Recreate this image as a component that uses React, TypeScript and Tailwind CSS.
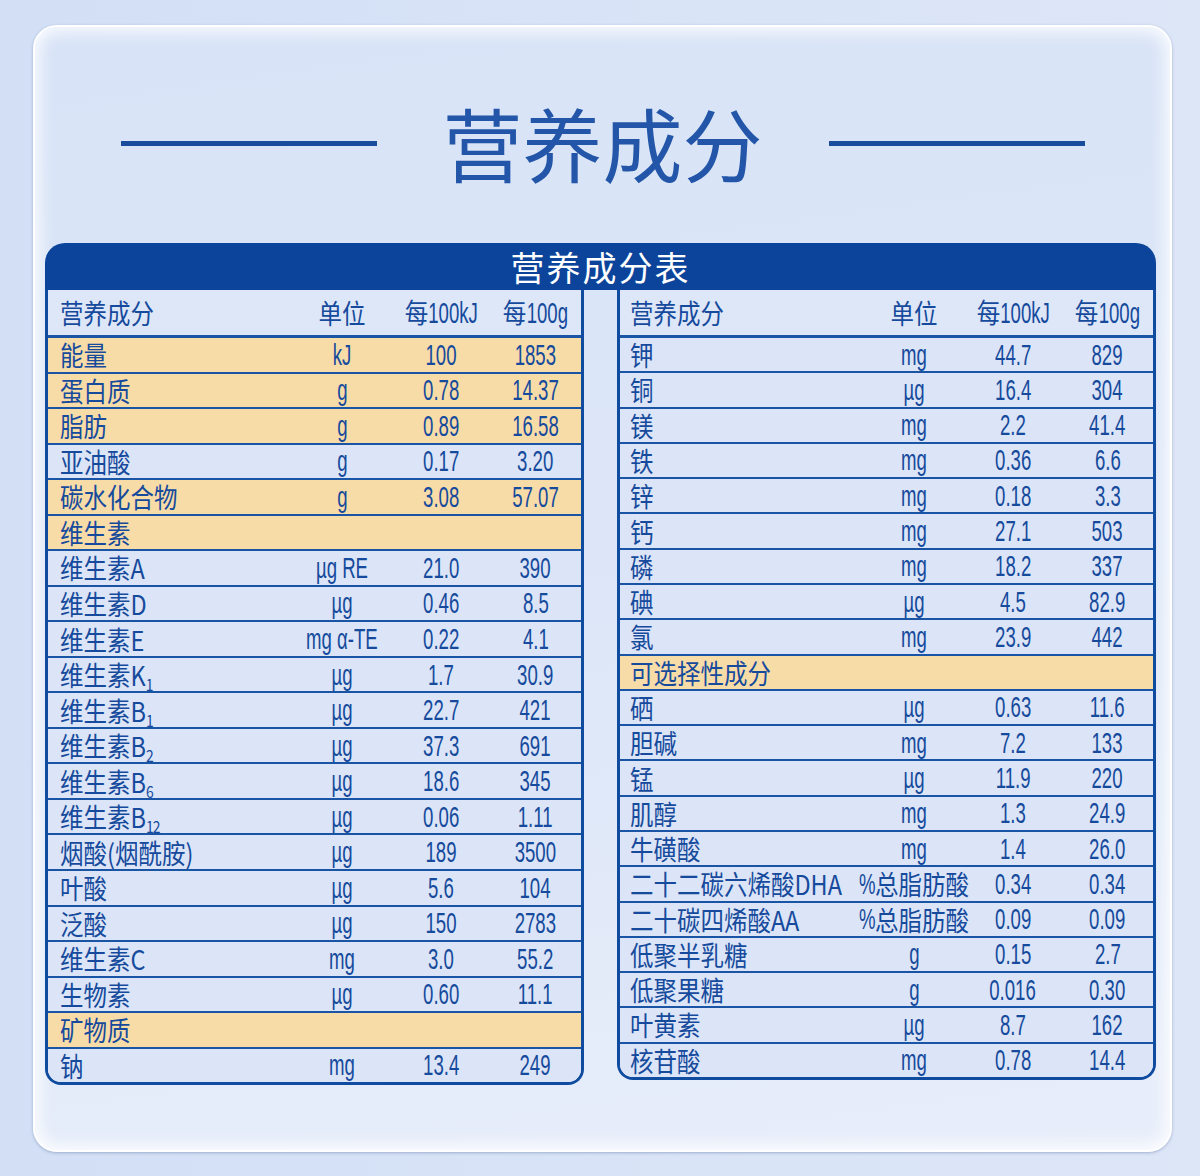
import React from "react";

type Row = {
  name: React.ReactNode;
  unit?: string;
  kj?: string;
  g?: string;
  hl?: boolean;
};

const CJK = "font-['Noto_Sans_CJK_SC',sans-serif]";
const NUM = "font-['Liberation_Sans','Noto_Sans_CJK_SC',sans-serif]";

// condensed latin / digits
function Cond({ children }: { children: React.ReactNode }) {
  return (
    <span
      className={`inline-block shrink-0 whitespace-nowrap text-[30px] leading-none scale-x-[0.62] ${NUM}`}
    >
      {children}
    </span>
  );
}

function Han({ children }: { children: React.ReactNode }) {
  return (
    <span
      className={`inline-block shrink-0 whitespace-nowrap text-[27px] leading-none scale-x-[0.87] ${CJK}`}
    >
      {children}
    </span>
  );
}

function Sub({ children }: { children: React.ReactNode }) {
  return <span className="relative top-[5px] text-[16px] leading-none tracking-[-1px]">{children}</span>;
}

function Unit({ u }: { u?: string }) {
  if (!u) return null;
  if (u === "%总脂肪酸") {
    return (
      <span className="flex items-center">
        <span className="flex w-[16px] justify-center">
          <Cond>%</Cond>
        </span>
        <span className="flex w-[94px] justify-center">
          <Han>总脂肪酸</Han>
        </span>
      </span>
    );
  }
  return <Cond>{u}</Cond>;
}

const left: Row[] = [
  { name: "能量", unit: "kJ", kj: "100", g: "1853", hl: true },
  { name: "蛋白质", unit: "g", kj: "0.78", g: "14.37", hl: true },
  { name: "脂肪", unit: "g", kj: "0.89", g: "16.58", hl: true },
  { name: "亚油酸", unit: "g", kj: "0.17", g: "3.20" },
  { name: "碳水化合物", unit: "g", kj: "3.08", g: "57.07", hl: true },
  { name: "维生素", hl: true },
  { name: "维生素A", unit: "µg RE", kj: "21.0", g: "390" },
  { name: "维生素D", unit: "µg", kj: "0.46", g: "8.5" },
  { name: "维生素E", unit: "mg α-TE", kj: "0.22", g: "4.1" },
  { name: <>维生素K<Sub>1</Sub></>, unit: "µg", kj: "1.7", g: "30.9" },
  { name: <>维生素B<Sub>1</Sub></>, unit: "µg", kj: "22.7", g: "421" },
  { name: <>维生素B<Sub>2</Sub></>, unit: "µg", kj: "37.3", g: "691" },
  { name: <>维生素B<Sub>6</Sub></>, unit: "µg", kj: "18.6", g: "345" },
  { name: <>维生素B<Sub>12</Sub></>, unit: "µg", kj: "0.06", g: "1.11" },
  { name: "烟酸(烟酰胺)", unit: "µg", kj: "189", g: "3500" },
  { name: "叶酸", unit: "µg", kj: "5.6", g: "104" },
  { name: "泛酸", unit: "µg", kj: "150", g: "2783" },
  { name: "维生素C", unit: "mg", kj: "3.0", g: "55.2" },
  { name: "生物素", unit: "µg", kj: "0.60", g: "11.1" },
  { name: "矿物质", hl: true },
  { name: "钠", unit: "mg", kj: "13.4", g: "249" },
];

const right: Row[] = [
  { name: "钾", unit: "mg", kj: "44.7", g: "829" },
  { name: "铜", unit: "µg", kj: "16.4", g: "304" },
  { name: "镁", unit: "mg", kj: "2.2", g: "41.4" },
  { name: "铁", unit: "mg", kj: "0.36", g: "6.6" },
  { name: "锌", unit: "mg", kj: "0.18", g: "3.3" },
  { name: "钙", unit: "mg", kj: "27.1", g: "503" },
  { name: "磷", unit: "mg", kj: "18.2", g: "337" },
  { name: "碘", unit: "µg", kj: "4.5", g: "82.9" },
  { name: "氯", unit: "mg", kj: "23.9", g: "442" },
  { name: "可选择性成分", hl: true },
  { name: "硒", unit: "µg", kj: "0.63", g: "11.6" },
  { name: "胆碱", unit: "mg", kj: "7.2", g: "133" },
  { name: "锰", unit: "µg", kj: "11.9", g: "220" },
  { name: "肌醇", unit: "mg", kj: "1.3", g: "24.9" },
  { name: "牛磺酸", unit: "mg", kj: "1.4", g: "26.0" },
  { name: "二十二碳六烯酸DHA", unit: "%总脂肪酸", kj: "0.34", g: "0.34" },
  { name: "二十碳四烯酸AA", unit: "%总脂肪酸", kj: "0.09", g: "0.09" },
  { name: "低聚半乳糖", unit: "g", kj: "0.15", g: "2.7" },
  { name: "低聚果糖", unit: "g", kj: "0.016", g: "0.30" },
  { name: "叶黄素", unit: "µg", kj: "8.7", g: "162" },
  { name: "核苷酸", unit: "mg", kj: "0.78", g: "14.4" },
];

const GRID = "grid grid-cols-[244px_100px_98px_1fr] items-center";

function NameCell({ children, pad }: { children: React.ReactNode; pad: string }) {
  return (
    <div className={`flex items-center ${pad}`}>
      <span
        className={`inline-block origin-left whitespace-nowrap text-[27px] leading-none scale-x-[0.87] ${CJK}`}
      >
        {children}
      </span>
    </div>
  );
}

function Table({ rows, height, pad }: { rows: Row[]; height: string; pad: string }) {
  return (
    <div
      className={`flex w-[539px] flex-col overflow-hidden rounded-b-[16px] border-x-[3px] border-b-[3px] border-[#0f4c9f] text-[#164a9c] ${height}`}
    >
      {/* column header */}
      <div className={`${GRID} h-[45px] shrink-0 bg-[#dde7f8]`}>
        <NameCell pad={pad}>营养成分</NameCell>
        <div className="flex justify-center">
          <Han>单位</Han>
        </div>
        <div className="flex justify-center">
          <span className="flex w-[24px] justify-center">
            <Han>每</Han>
          </span>
          <span className="flex w-[50px] justify-center">
            <Cond>100kJ</Cond>
          </span>
        </div>
        <div className="flex justify-center">
          <span className="flex w-[24px] justify-center">
            <Han>每</Han>
          </span>
          <span className="flex w-[42px] justify-center">
            <Cond>100g</Cond>
          </span>
        </div>
      </div>

      {rows.map((r, i) => (
        <div
          key={i}
          className={[
            GRID,
            "min-h-0 flex-1 border-[#1a54a4]",
            i === 0 ? "border-t-[3px]" : "border-t-2",
            r.hl ? "bg-[#f8dca8]" : "bg-[#dbe5f7]",
          ].join(" ")}
        >
          <NameCell pad={pad}>{r.name}</NameCell>
          <div className="flex justify-center">
            <Unit u={r.unit} />
          </div>
          <div className="flex justify-center">{r.kj && <Cond>{r.kj}</Cond>}</div>
          <div className="flex justify-center">{r.g && <Cond>{r.g}</Cond>}</div>
        </div>
      ))}
    </div>
  );
}

export default function App() {
  return (
    <div className="h-[1176px] w-[1200px] bg-[linear-gradient(90deg,#d2dff5,#d9e4f7_60%,#dde6f7)] pl-[33px] pt-[25px]">
      <div className="flex h-[1127px] w-[1139px] flex-col rounded-[24px] border-2 border-white bg-[linear-gradient(172deg,#d8e3f7_0%,#dde7f8_55%,#e8eefa_100%)] shadow-[inset_0_0_16px_5px_rgba(255,255,255,0.85),0_1px_3px_rgba(110,130,170,0.55)]">
        {/* big title */}
        <div className="mt-[64px] flex h-[100px] items-center justify-center gap-[66px]">
          <div className="mt-[4px] h-[5px] w-[256px] bg-[#1a4c9d]" />
          <h1 className={`text-[80px] font-normal leading-none text-[#2356a8] ${CJK}`}>营养成分</h1>
          <div className="mt-[4px] h-[5px] w-[256px] bg-[#1a4c9d]" />
        </div>

        {/* nutrition table */}
        <div className="ml-[10px] mt-[52px] w-[1111px]">
          <div className="flex h-[47px] items-center justify-center rounded-t-[20px] bg-[#0b449a]">
            <span className={`text-[34px] leading-none tracking-[2px] text-white ${CJK}`}>营养成分表</span>
          </div>
          <div className="flex gap-[33px]">
            <Table rows={left} height="h-[795px]" pad="pl-[12px]" />
            <Table rows={right} height="h-[790px]" pad="pl-[10px]" />
          </div>
        </div>
      </div>
    </div>
  );
}
